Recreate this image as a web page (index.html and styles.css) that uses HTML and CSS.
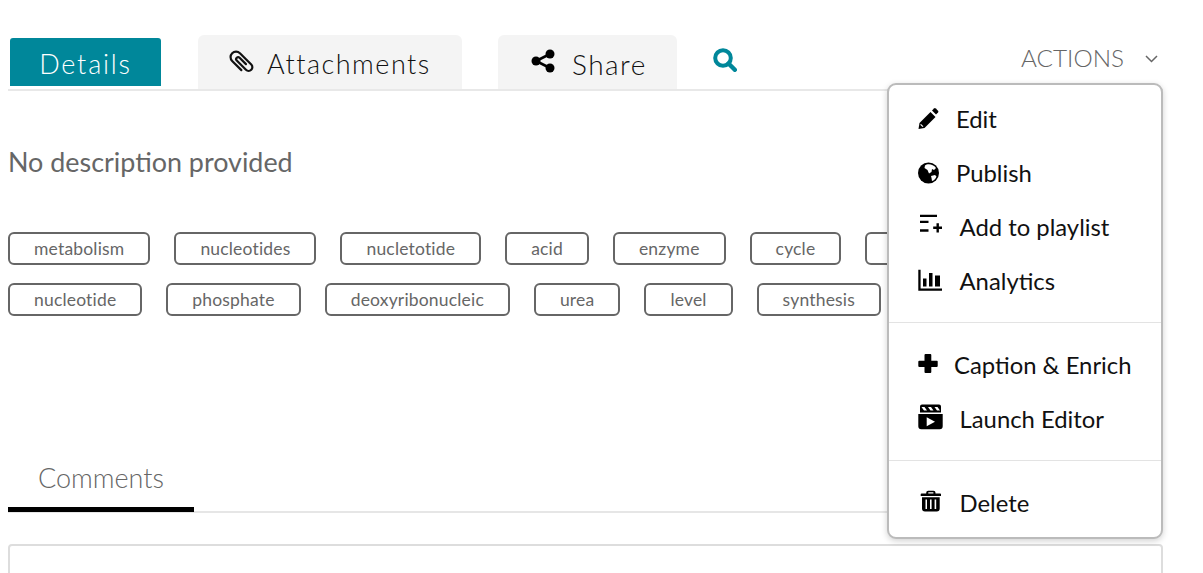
FILE: index.html
```html
<!DOCTYPE html>
<html lang="en">
<head>
<meta charset="utf-8">
<title>Media details</title>
<link rel="stylesheet" href="styles.css">
</head>
<body>
<main class="page">
  <nav class="tabs">
    <a class="tab tab-active">Details</a>
    <a class="tab tab-attach">
      <svg class="tab-icon tab-clip" viewBox="0 0 24 24"><path transform="rotate(-45 12 12) translate(0 1)" d="M6.500 17V4a5.500 5.500 0 0 1 11 0V20a3.750 3.750 0 0 1-7.500 0V7a2 2 0 0 1 4 0V16" fill="none" stroke="#111" stroke-width="2.200" stroke-linecap="round"/></svg>
      <span>Attachments</span>
    </a>
    <a class="tab tab-share">
      <svg class="tab-icon" viewBox="0 0 24 24"><path d="M19 5 5 12l14 7" fill="none" stroke="#000" stroke-width="2.600"/><circle cx="19" cy="5" r="4.500"/><circle cx="5" cy="12" r="4.500"/><circle cx="19" cy="19" r="4.500"/></svg>
      <span>Share</span>
    </a>
    <button class="search" aria-label="Search">
      <svg viewBox="0 0 24 24"><circle cx="10" cy="10" r="7.800" fill="none" stroke="#00879a" stroke-width="4"/><path d="m15.500 15.500 6.300 6.300" stroke="#00879a" stroke-width="4.400" stroke-linecap="round"/></svg>
    </button>
    <div class="actions">
      <span>ACTIONS</span>
      <svg class="chevron" viewBox="0 0 13 8"><path d="m1 1 5.500 5.500L12 1" fill="none" stroke="#666" stroke-width="1.500"/></svg>
    </div>
  </nav>

  <p class="description">No description provided</p>

  <ul class="tags">
    <li class="tag">metabolism</li>
    <li class="tag">nucleotides</li>
    <li class="tag">nucletotide</li>
    <li class="tag">acid</li>
    <li class="tag">enzyme</li>
    <li class="tag">cycle</li>
    <li class="tag">pathway</li>
  </ul>
  <ul class="tags">
    <li class="tag">nucleotide</li>
    <li class="tag">phosphate</li>
    <li class="tag">deoxyribonucleic</li>
    <li class="tag">urea</li>
    <li class="tag">level</li>
    <li class="tag">synthesis</li>
  </ul>

  <div class="comment-tabs">
    <a class="comment-tab">Comments</a>
  </div>
  <div class="comment-box"></div>

  <div class="menu">
    <div class="menu-group">
      <a class="menu-item">
        <svg class="mi" viewBox="0 0 24 24"><path d="M12.500 6 17.500 11 6.500 22 .5 23 1.500 17z"/><path d="M14 4.500 16 2.500a1.300 1.300 0 0 1 1.800 0l2.200 2.200a1.300 1.300 0 0 1 0 1.800l-2 2z"/><path d="M2.600 18.300 5 20.700" stroke="#fff" stroke-width="1.200"/></svg>
        <span class="gap-14">Edit</span>
      </a>
      <a class="menu-item">
        <svg class="mi" viewBox="0 0 24 24"><circle cx="10.500" cy="13" r="10.500"/><path d="M7 5.500C9 3.500 15 3.500 18 8l-2 2-2-1-.5 3-2.500 1.500L9.500 10 6.500 8zM13 16l4-1 1.500 1.500c-1 2.500-2.500 4-4.500 4.500l-.5-3z" fill="#fff"/></svg>
        <span class="gap-14">Publish</span>
      </a>
      <a class="menu-item">
        <svg class="mi" viewBox="0 0 24 24"><path d="M2 .7h17v2.300H2zM2 6.800h8.500v2.300H2zM2 15.200h8.500v2.500H2zM18.500 9.200h2.400v3.400h3.100v2.400h-3.100v3.400h-2.400V15h-3.300v-2.400h3.300z"/></svg>
        <span class="gap-18">Add to playlist</span>
      </a>
      <a class="menu-item">
        <svg class="mi" viewBox="0 0 24 24"><path d="M.3 1.700h2.300v18.700h21.400v2.300H.3zM5 10.500h3.500v8H5zM11 5h3.500v13.500H11zM17 7.500h5v11h-5z"/></svg>
        <span class="gap-18">Analytics</span>
      </a>
    </div>
    <div class="menu-group menu-group-mid">
      <a class="menu-item">
        <svg class="mi" viewBox="0 0 24 24"><path d="M7.500 2h4.800a1 1 0 0 1 1 1v5.700H19a.7.7 0 0 1 .7.7v4.500a1 1 0 0 1-1 1h-5.400V20a1 1 0 0 1-1 1H7.500a1 1 0 0 1-1-1v-5.100H1.300a1 1 0 0 1-1-1V9.700a1 1 0 0 1 1-1h5.200V3a1 1 0 0 1 1-1z"/></svg>
        <span class="gap-12">Caption &amp; Enrich</span>
      </a>
      <a class="menu-item">
        <svg class="mi mi-clapper" viewBox="0 0 25 26"><path d="M.3 10h24.400v12.300a3 3 0 0 1-3 3H3.300a3 3 0 0 1-3-3zM8.700 13.200v9.100l8.300-4.550z" fill-rule="evenodd"/><path d="M2 2.500A2 2 0 0 1 4 .5H21a2 2 0 0 1 2 2V8.500H2zM3.500 3 6 6.500H9L6.500 3zM10 3 12.500 6.500H15.500L13 3zM16.500 3 19 6.500H22L19.500 3z" fill-rule="evenodd"/></svg>
        <span class="gap-17">Launch Editor</span>
      </a>
    </div>
    <div class="menu-group menu-group-last">
      <a class="menu-item">
        <svg class="mi" viewBox="0 0 24 24"><path d="M10.500 .7h5a2 2 0 0 1 2 2V3.500h4.700a.8.8 0 0 1 .8.800V6H2.700V4.300a.8.8 0 0 1 .8-.8h4.700V2.700a2 2 0 0 1 2-2zM10.300 2.200v1.300h5.100V2.200z" fill-rule="evenodd"/><path d="M4 7.200h17.700v11.300a3 3 0 0 1-3 3H7a3 3 0 0 1-3-3zM7.500 9.500V19H9V9.500zM12 9.500V19h1.600V9.500zM16.600 9.500V19h1.600V9.500z" fill-rule="evenodd"/></svg>
        <span class="gap-18">Delete</span>
      </a>
    </div>
  </div>
</main>
</body>
</html>
```
FILE: styles.css
```css
* { box-sizing: border-box; }
html, body { margin: 0; padding: 0; height: 573px; overflow: hidden; background: #fff; }
body { font-family: "Lato", "Liberation Sans", sans-serif; color: #000; }

.page { position: relative; width: 1203px; padding: 35px 40px 0 8px; height: 573px; overflow: hidden; }

.tabs { display: flex; align-items: flex-start; height: 56px; border-bottom: 2px solid #e8e8e8; }
.tab { display: flex; align-items: center; font-weight: 300; font-size: 27px; letter-spacing: 1.500px; color: #111; background: #f4f4f4; border-radius: 6px 6px 0 0; height: 54px; }
.tab span { padding-top: 2px; }
.tab-active { margin: 3px 0 0 2px; height: 48px; width: 151px; padding-top: 2px; justify-content: center; letter-spacing: 1.800px; background: #00879a; color: #fff; border-radius: 3px 3px 0 0; }
.tab-attach { margin-left: 37px; width: 264px; padding-left: 31px; }
.tab-share { margin-left: 36px; width: 179px; padding-left: 33px; font-size: 28px; }
.tab-share span { margin-left: 17px; padding-top: 3px; }
.tab-attach span { margin-left: 14px; }
.tab-icon { width: 24px; height: 24px; margin-top: -2px; }
.tab-share .tab-icon { margin-top: -3px; }
.tab-clip { margin-top: -1px; overflow: visible; }
.search { margin: 13px 0 0 36px; padding: 0; width: 24px; height: 24px; border: 0; background: none; }
.search svg { display: block; width: 24px; height: 24px; }
.actions { margin-left: auto; display: flex; align-items: center; height: 44px; font-weight: 300; font-size: 24.300px; color: #666; }
.chevron { width: 13px; height: 8px; margin: 3px 5px 0 21px; }

.description { margin: 55px 0 0; font-size: 26.900px; line-height: 32px; color: #666; }

.tags { list-style: none; margin: 54px 0 0; padding: 0; display: flex; gap: 24px; white-space: nowrap; }
.tags + .tags { margin-top: 18px; }
.tag { height: 33px; padding: 0 24px; border: 2px solid #666; border-radius: 6px; font-size: 17.500px; letter-spacing: .18px; line-height: 30px; color: #666; }

.comment-tabs { margin-top: 133px; height: 64px; border-bottom: 2px solid #e6e6e6; }
.comment-tab { display: block; width: 186px; height: 63px; padding-left: 30px; line-height: 58px; font-weight: 300; font-size: 27px; color: #666; border-bottom: 5px solid #000; }
.comment-box { margin-top: 31px; height: 60px; border: 2px solid #ddd; border-radius: 4px; }

.menu { position: absolute; left: 887px; top: 83px; width: 276px; height: 456px; background: #fff; border: 2px solid #bbb; border-radius: 9px; box-shadow: 0 2px 6px rgba(0,0,0,.18); }
.menu-group { padding: 6px 0 0; border-bottom: 1px solid #e3e3e3; height: 238px; }
.menu-group-mid { height: 138px; padding: 14px 0 0; }
.menu-group-last { height: auto; padding: 14px 0 0; border-bottom: 0; }
.menu-item { display: flex; align-items: center; height: 54px; padding-left: 29px; font-size: 23.850px; color: #111; }
.mi { flex: none; width: 24px; height: 24px; overflow: visible; }
.mi-clapper { width: 25px; height: 26px; margin-top: -3px; }
.gap-12 { margin-left: 12px; }
.gap-14 { margin-left: 14px; }
.gap-17 { margin-left: 16.500px; }
.gap-18 { margin-left: 17.500px; }
```
